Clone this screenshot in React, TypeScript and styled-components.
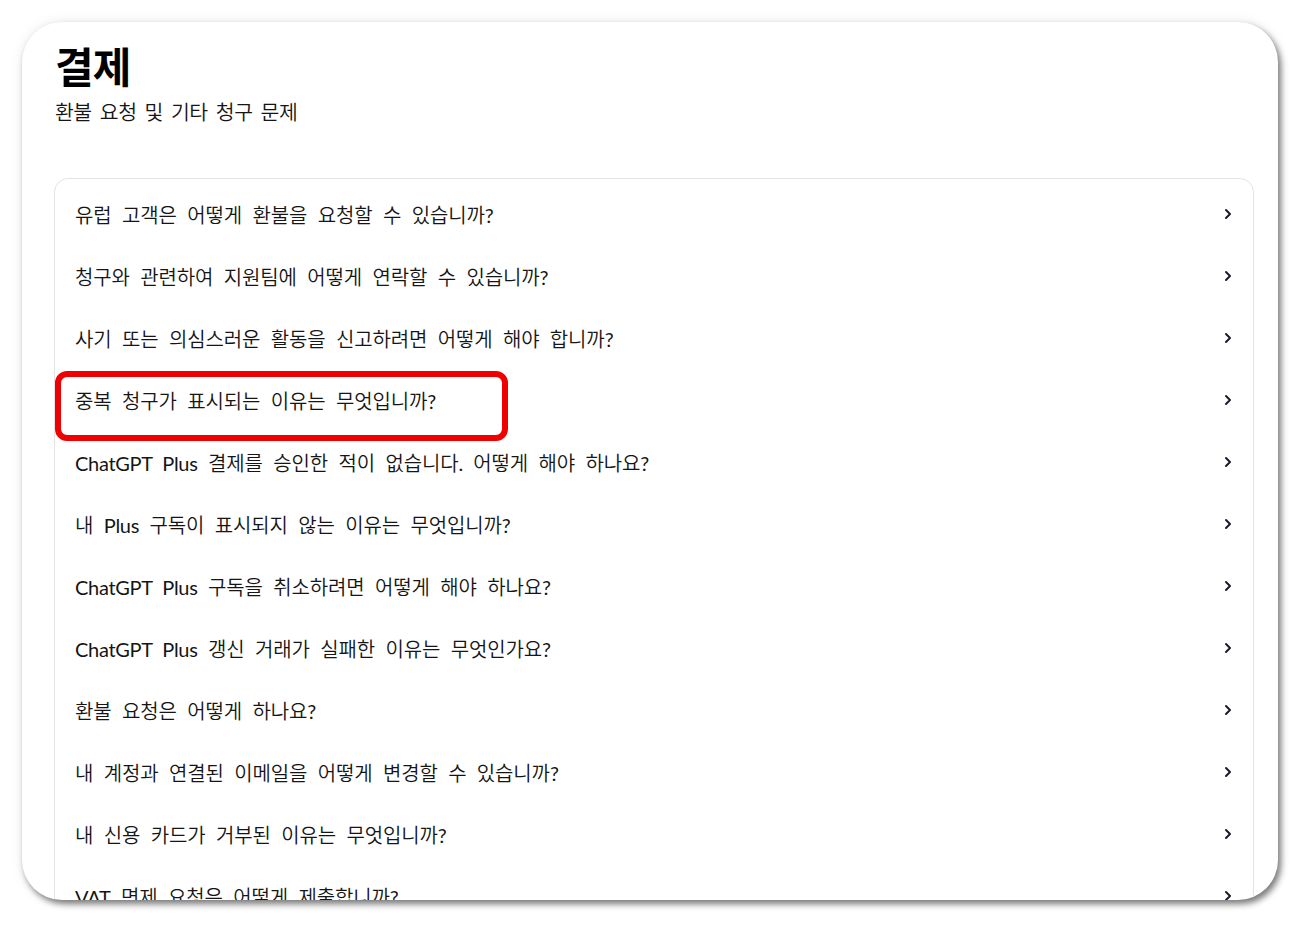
import React from "react";
import styled, { createGlobalStyle } from "styled-components";

const Global = createGlobalStyle`
  html, body { margin: 0; padding: 0; background: #ffffff; }
  body { font-family: Lato, "Noto Sans CJK KR", sans-serif; }
`;

const Page = styled.div`
  width: 1308px;
  height: 931px;
  padding: 22px 0 0 22px;
  box-sizing: border-box;
  background: #ffffff;
`;

const Card = styled.div`
  position: relative;
  width: 1256px;
  height: 878px;
  box-sizing: border-box;
  border-radius: 40px;
  background: #ffffff;
  overflow: hidden;
  padding: 18px 24px 0 32px;
  box-shadow: 3px 4px 6px rgba(0, 0, 0, 0.5), 0 0 14px rgba(0, 0, 0, 0.08);
`;

const Title = styled.h1`
  margin: 0 0 0 1px;
  font-family: "Noto Sans CJK KR", sans-serif;
  font-size: 42px;
  letter-spacing: -1px;
  line-height: 50px;
  font-weight: 700;
  color: #000;
`;

const Subtitle = styled.p`
  margin: 7px 0 0 1px;
  font-family: "Noto Sans CJK KR", sans-serif;
  font-size: 20.5px;
  font-weight: 350;
  letter-spacing: -0.5px;
  word-spacing: 4px;
  line-height: 28px;
  color: #151515;
`;

const List = styled.div`
  margin-top: 53px;
  border: 1px solid #e3e3e3;
  border-radius: 14px;
  padding-top: 4px;
  display: flex;
  flex-direction: column;
`;

const Row = styled.div`
  position: relative;
  height: 62px;
  display: flex;
  align-items: center;
  justify-content: space-between;
  padding: 0 21px 0 20px;
`;

const Question = styled.span`
  font-family: Lato, "Noto Sans CJK KR", sans-serif;
  font-size: 20px;
  font-weight: 350;
  letter-spacing: -0.15px;
  word-spacing: 5.2px;
  color: #151515;
`;

const Latin = styled.span`
  font-weight: 400;
  letter-spacing: -0.3px;
`;

const Highlight = styled.div`
  position: absolute;
  left: 0;
  top: 2px;
  width: 453px;
  height: 70px;
  box-sizing: border-box;
  border: 6px solid #f00000;
  border-radius: 12px;
  pointer-events: none;
`;

const Chevron = () => (
  <svg width="8" height="12" viewBox="0 0 8 12" aria-hidden>
    <path d="M2 2 L6 6 L2 10" fill="none" stroke="#1c1b29" strokeWidth="2" strokeLinecap="round" strokeLinejoin="round" />
  </svg>
);

const questions = [
  "유럽 고객은 어떻게 환불을 요청할 수 있습니까?",
  "청구와 관련하여 지원팀에 어떻게 연락할 수 있습니까?",
  "사기 또는 의심스러운 활동을 신고하려면 어떻게 해야 합니까?",
  "중복 청구가 표시되는 이유는 무엇입니까?",
  "ChatGPT Plus 결제를 승인한 적이 없습니다. 어떻게 해야 하나요?",
  "내 Plus 구독이 표시되지 않는 이유는 무엇입니까?",
  "ChatGPT Plus 구독을 취소하려면 어떻게 해야 하나요?",
  "ChatGPT Plus 갱신 거래가 실패한 이유는 무엇인가요?",
  "환불 요청은 어떻게 하나요?",
  "내 계정과 연결된 이메일을 어떻게 변경할 수 있습니까?",
  "내 신용 카드가 거부된 이유는 무엇입니까?",
  "VAT 면제 요청은 어떻게 제출합니까?",
];

const renderText = (q: string) =>
  q.split(/([A-Za-z?.]+(?: [A-Za-z]+)*)/).map((part, i) =>
    i % 2 === 1 ? <Latin key={i}>{part}</Latin> : <React.Fragment key={i}>{part}</React.Fragment>
  );

export default function App() {
  return (
    <>
      <Global />
      <Page>
        <Card>
          <Title>결제</Title>
          <Subtitle>환불 요청 및 기타 청구 문제</Subtitle>
          <List>
            {questions.map((q, i) => (
              <Row key={i}>
                {i === 3 && <Highlight />}
                <Question>{renderText(q)}</Question>
                <Chevron />
              </Row>
            ))}
          </List>
        </Card>
      </Page>
    </>
  );
}
